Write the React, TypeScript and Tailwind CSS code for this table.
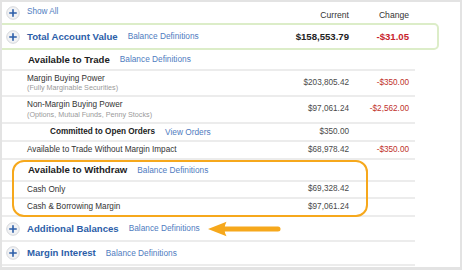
import React from "react";

function PlusIcon() {
  return (
    <svg width="14" height="14" viewBox="0 0 14 14" className="shrink-0">
      <circle cx="7" cy="7" r="6.3" fill="#f1f2f4" stroke="#d5d7db" strokeWidth="1" />
      <path d="M3.8 7h6.4M7 3.8v6.4" stroke="#2c5ea8" strokeWidth="1.6" strokeLinecap="round" />
    </svg>
  );
}

function Arrow() {
  return (
    <svg width="73" height="16" viewBox="0 0 73 16" className="ml-[8px] shrink-0">
      <path d="M15 8H70" stroke="#f6a81c" strokeWidth="5" strokeLinecap="round" />
      <path d="M0 8L18.5 0.8Q14.5 8 18.5 15.2Z" fill="#f6a81c" />
    </svg>
  );
}

function Defs({ label = "Balance Definitions" }: { label?: string }) {
  return <span className="ml-[10px] text-[8.3px] text-[#4f7cc0]">{label}</span>;
}

function Values({ current, change, bold }: { current?: string; change?: string; bold?: boolean }) {
  return (
    <>
      <span
        className={
          bold
            ? "ml-auto text-right text-[9.6px] font-bold text-[#222]"
            : "ml-auto text-right text-[8.2px] text-[#4a4a4a]"
        }
      >
        {current}
      </span>
      <span
        className={
          bold
            ? "w-[60px] text-right text-[9.6px] font-bold text-[#c8232c]"
            : "w-[60px] text-right text-[8.2px] text-[#c0302b]"
        }
      >
        {change}
      </span>
    </>
  );
}

function Line({
  h,
  label,
  sub,
  current,
  change,
}: {
  h: string;
  label: string;
  sub?: string;
  current?: string;
  change?: string;
}) {
  return (
    <div className={`${h} flex items-center border-b-2 border-[#ececec] pl-[25px] pr-[6px]`}>
      <div className="flex flex-col leading-[9.5px]">
        <span className="text-[8.2px] text-[#333]">{label}</span>
        {sub && <span className="text-[7.2px] text-[#9a9a9a]">{sub}</span>}
      </div>
      <Values current={current} change={change} />
    </div>
  );
}

export default function App() {
  return (
    <div className="w-[462px] h-[270px] bg-[#e3e3e3] pt-[2px] pl-[2px] pr-[2px] pb-[3px] font-['Liberation_Sans',Arial,sans-serif] leading-none">
      <div className="h-full bg-white overflow-hidden">
        <div className="w-[413px]">
          <div className="h-[21px] flex items-center pl-[4px] pr-[6px]">
            <PlusIcon />
            <span className="ml-[7px] text-[8.2px] text-[#4f7cc0]">Show All</span>
            <span className="ml-auto mt-[6px] text-right text-[8.6px] text-[#333]">Current</span>
            <span className="w-[60px] mt-[6px] text-right text-[8.6px] text-[#333]">Change</span>
          </div>

          <div className="relative h-[27px] flex items-center pl-[4px] pr-[6px]">
            <div className="absolute inset-y-0 -left-[8px] w-[445px] rounded-[5px] border-2 border-[#dcedc8]" />
            <PlusIcon />
            <span className="ml-[7px] text-[9.6px] font-bold text-[#2c5ea8]">Total Account Value</span>
            <Defs />
            <Values current="$158,553.79" change="-$31.05" bold />
          </div>

          <div className="h-[21px] flex items-center border-b-2 border-[#ececec] pl-[26px]">
            <span className="text-[9.6px] font-bold text-[#222]">Available to Trade</span>
            <Defs />
          </div>

          <Line
            h="h-[26px]"
            label="Margin Buying Power"
            sub="(Fully Marginable Securities)"
            current="$203,805.42"
            change="-$350.00"
          />
          <Line
            h="h-[27px]"
            label="Non-Margin Buying Power"
            sub="(Options, Mutual Funds, Penny Stocks)"
            current="$97,061.24"
            change="-$2,562.00"
          />

          <div className="h-[18px] flex items-center border-b-2 border-[#ececec] pl-[48px] pr-[6px]">
            <span className="text-[8.2px] font-bold text-[#222]">Committed to Open Orders</span>
            <Defs label="View Orders" />
            <Values current="$350.00" />
          </div>

          <Line
            h="h-[18px]"
            label="Available to Trade Without Margin Impact"
            current="$68,978.42"
            change="-$350.00"
          />

          <div className="relative">
            <div className="absolute inset-y-0 left-[10px] w-[356px] rounded-[12px] border-2 border-[#f6a81c]" />
            <div className="h-[22px] flex items-center border-b-2 border-[#ececec] pl-[26px]">
              <span className="text-[9.6px] font-bold text-[#222]">Available to Withdraw</span>
              <Defs />
            </div>
            <Line h="h-[17px]" label="Cash Only" current="$69,328.42" />
            <Line h="h-[18px]" label="Cash & Borrowing Margin" current="$97,061.24" />
          </div>

          <div className="h-[25px] flex items-center border-b-2 border-[#ececec] pl-[4px] pr-[6px]">
            <PlusIcon />
            <span className="ml-[7px] text-[9.6px] font-bold text-[#2c5ea8]">Additional Balances</span>
            <Defs />
            <Arrow />
          </div>

          <div className="h-[24px] flex items-center border-b-2 border-[#ececec] pl-[4px] pr-[6px]">
            <PlusIcon />
            <span className="ml-[7px] text-[9.6px] font-bold text-[#2c5ea8]">Margin Interest</span>
            <Defs />
          </div>
        </div>
      </div>
    </div>
  );
}
